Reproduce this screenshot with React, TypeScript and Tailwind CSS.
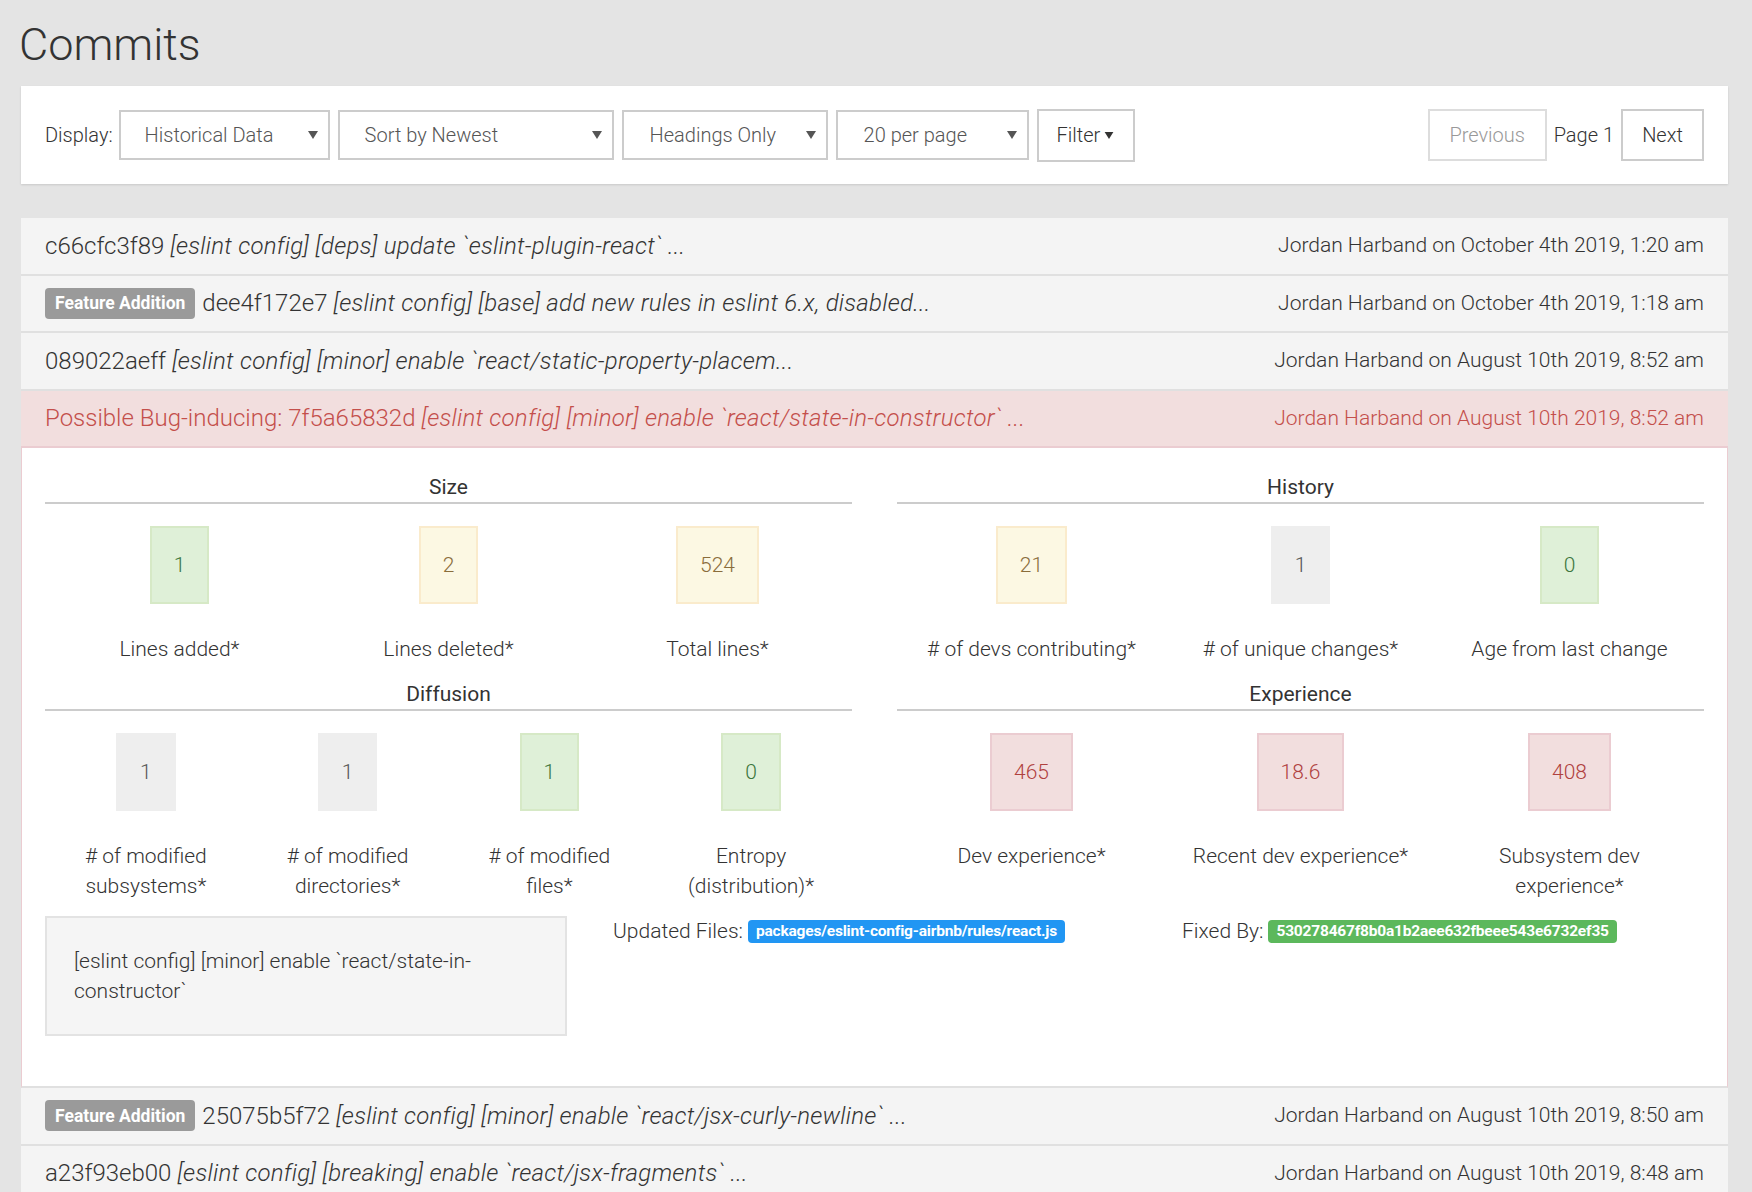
import React from "react";

type Tone = "green" | "yellow" | "gray" | "red";

type Metric = { value: string; label: React.ReactNode; tone: Tone };

type Commit = {
  hash: string;
  message: string;
  author: string;
  date: string;
  feature?: boolean;
  bug?: boolean;
};

const TONES: Record<Tone, string> = {
  green: "bg-[#dff0d8] border-[#d6e9c6] text-[#3c763d]",
  yellow: "bg-[#fcf8e3] border-[#faebcc] text-[#8a6d3b]",
  gray: "bg-[#eeeeee] border-[#eeeeee] text-[#555555]",
  red: "bg-[#f2dede] border-[#ebccd1] text-[#b0413e]",
};

const SIZE: Metric[] = [
  { value: "1", label: "Lines added*", tone: "green" },
  { value: "2", label: "Lines deleted*", tone: "yellow" },
  { value: "524", label: "Total lines*", tone: "yellow" },
];

const HISTORY: Metric[] = [
  { value: "21", label: "# of devs contributing*", tone: "yellow" },
  { value: "1", label: "# of unique changes*", tone: "gray" },
  { value: "0", label: "Age from last change", tone: "green" },
];

const DIFFUSION: Metric[] = [
  { value: "1", label: "# of modified subsystems*", tone: "gray" },
  { value: "1", label: "# of modified directories*", tone: "gray" },
  { value: "1", label: "# of modified files*", tone: "green" },
  { value: "0", label: "Entropy (distribution)*", tone: "green" },
];

const EXPERIENCE: Metric[] = [
  { value: "465", label: "Dev experience*", tone: "red" },
  { value: "18.6", label: "Recent dev experience*", tone: "red" },
  { value: "408", label: "Subsystem dev experience*", tone: "red" },
];

const BEFORE: Commit[] = [
  {
    hash: "c66cfc3f89",
    message: "[eslint config] [deps] update `eslint-plugin-react` ...",
    author: "Jordan Harband",
    date: "October 4th 2019, 1:20 am",
  },
  {
    hash: "dee4f172e7",
    message: "[eslint config] [base] add new rules in eslint 6.x, disabled...",
    author: "Jordan Harband",
    date: "October 4th 2019, 1:18 am",
    feature: true,
  },
  {
    hash: "089022aeff",
    message: "[eslint config] [minor] enable `react/static-property-placem...",
    author: "Jordan Harband",
    date: "August 10th 2019, 8:52 am",
  },
];

const SELECTED: Commit = {
  hash: "7f5a65832d",
  message: "[eslint config] [minor] enable `react/state-in-constructor` ...",
  author: "Jordan Harband",
  date: "August 10th 2019, 8:52 am",
  bug: true,
};

const AFTER: Commit[] = [
  {
    hash: "25075b5f72",
    message: "[eslint config] [minor] enable `react/jsx-curly-newline` ...",
    author: "Jordan Harband",
    date: "August 10th 2019, 8:50 am",
    feature: true,
  },
  {
    hash: "a23f93eb00",
    message: "[eslint config] [breaking] enable `react/jsx-fragments` ...",
    author: "Jordan Harband",
    date: "August 10th 2019, 8:48 am",
  },
];

function Caret({ className }: { className: string }) {
  return (
    <svg viewBox="0 0 10 8" className={className} aria-hidden="true">
      <path d="M0 0h10L5 8z" fill="currentColor" />
    </svg>
  );
}

function Select({ label, className }: { label: string; className: string }) {
  return (
    <div
      className={`flex h-[50px] items-center justify-between border-2 border-[#cccccc] bg-white pr-[10px] text-[20px] text-[#555555] ${className}`}
    >
      <span>{label}</span>
      <Caret className="h-[8px] w-[10px] text-[#555555]" />
    </div>
  );
}

function Badge({ children, className }: { children: React.ReactNode; className: string }) {
  return (
    <span
      className={`inline-flex items-center whitespace-nowrap rounded-[4px] font-bold text-white ${className}`}
    >
      {children}
    </span>
  );
}

function CommitRow({ c }: { c: Commit }) {
  return (
    <div
      className={`flex h-[57.5px] items-center justify-between border-b-2 px-6 font-light ${
        c.bug
          ? "border-[#ebccd1] bg-[#f2dede] text-[#c44f4b]"
          : "border-[#e0e0e0] bg-[#f4f4f4] text-[#333333]"
      }`}
    >
      <div className="flex items-center gap-[7px] whitespace-nowrap">
        {c.feature && (
          <Badge className="h-[31px] bg-[#9a9a9a] px-[10px] text-[17.5px]">
            Feature Addition
          </Badge>
        )}
        <span className="text-[24px]">
          {c.bug && "Possible Bug-inducing: "}
          {c.hash} <i className="tracking-[0.25px]">{c.message}</i>
        </span>
      </div>
      <span className="whitespace-nowrap text-[21px]">
        {c.author} on {c.date}
      </span>
    </div>
  );
}

function Section({ title, items, four }: { title: string; items: Metric[]; four?: boolean }) {
  return (
    <div>
      <h3 className="border-b-2 border-[#cccccc] text-center text-[21px] font-normal leading-[30px] text-[#333333]">
        {title}
      </h3>
      <div className={four ? "grid grid-cols-4" : "grid grid-cols-3"}>
        {items.map((m, i) => (
          <div key={i} className="flex flex-col items-center px-[15px] pt-[22px] text-center">
            <div
              className={`border-2 px-[22px] py-[22px] text-[21px] font-light leading-[30px] ${TONES[m.tone]}`}
            >
              {m.value}
            </div>
            <div className="mt-[30px] text-[21px] font-light leading-[30px] text-[#333333]">
              {m.label}
            </div>
          </div>
        ))}
      </div>
    </div>
  );
}

function Details() {
  return (
    <div className="border-x border-b-2 border-x-[#ebccd1] border-b-[#e0e0e0] bg-white px-[23px] pb-[50px] pt-6">
      <div className="grid grid-cols-2 gap-x-[45px] gap-y-[15px]">
        <Section title="Size" items={SIZE} />
        <Section title="History" items={HISTORY} />
        <Section title="Diffusion" items={DIFFUSION} four />
        <Section title="Experience" items={EXPERIENCE} />
      </div>

      <div className="mt-[15px] grid grid-cols-3 items-start gap-x-[30px] text-[21px] font-light leading-[30px] text-[#333333]">
        <div className="w-[522px] border-2 border-[#e3e3e3] bg-[#f5f5f5] px-[27px] py-[28px]">
          [eslint config] [minor] enable `react/state-in-constructor`
        </div>
        <div className="flex items-center gap-[5px] pl-[5px]">
          <span>Updated Files:</span>
          <Badge className="h-[23px] bg-[#2196f3] px-[8px] text-[15.5px] tracking-[-0.2px]">
            packages/eslint-config-airbnb/rules/react.js
          </Badge>
        </div>
        <div className="flex items-center gap-[5px] pl-[11px]">
          <span>Fixed By:</span>
          <Badge className="h-[23px] bg-[#5cb85c] px-[8px] text-[15.5px] tracking-[-0.2px]">
            530278467f8b0a1b2aee632fbeee543e6732ef35
          </Badge>
        </div>
      </div>
    </div>
  );
}

export default function App() {
  return (
    <div
      className="h-screen overflow-hidden bg-[#e4e4e4] pl-[21px] pr-[24px] pt-[18px]"
      style={{ fontFamily: "Roboto, 'Liberation Sans', sans-serif" }}
    >
      <h1 className="ml-[-2px] text-[45px] font-light leading-[53px] text-[#333333]">Commits</h1>

      {/* Панель фільтрів */}
      <div className="mt-[15px] flex h-[98px] items-center justify-between bg-white px-6 shadow-[0_1px_2px_rgba(0,0,0,0.12)]">
        <div className="flex items-center gap-[8px]">
          <span className="mr-[-2px] text-[20px] font-light text-[#333333]">Display:</span>
          <Select label="Historical Data" className="w-[211px] pl-[24px] font-light" />
          <Select label="Sort by Newest" className="w-[276px] pl-[25px] font-light" />
          <Select label="Headings Only" className="w-[206px] pl-[26px] font-light" />
          <Select label="20 per page" className="w-[193px] pl-[26px] font-light" />
          <div className="flex h-[53px] items-center gap-[3px] border-2 border-[#cccccc] px-[18px] text-[20px] font-light text-[#333333]">
            Filter
            <Caret className="h-[7px] w-[12px] text-[#333333]" />
          </div>
        </div>
        <div className="flex items-center gap-[7px] text-[20px] font-light">
          <div className="flex h-[52px] w-[119px] items-center justify-center border-2 border-[#dddddd] text-[#999999]">
            Previous
          </div>
          <span className="text-[#333333]">Page 1</span>
          <div className="flex h-[52px] w-[83px] items-center justify-center border-2 border-[#cccccc] text-[#333333]">
            Next
          </div>
        </div>
      </div>

      {/* Список комітів */}
      <div className="mt-[34px]">
        {BEFORE.map((c) => (
          <CommitRow key={c.hash} c={c} />
        ))}
        <CommitRow c={SELECTED} />
        <Details />
        {AFTER.map((c) => (
          <CommitRow key={c.hash} c={c} />
        ))}
      </div>
    </div>
  );
}
